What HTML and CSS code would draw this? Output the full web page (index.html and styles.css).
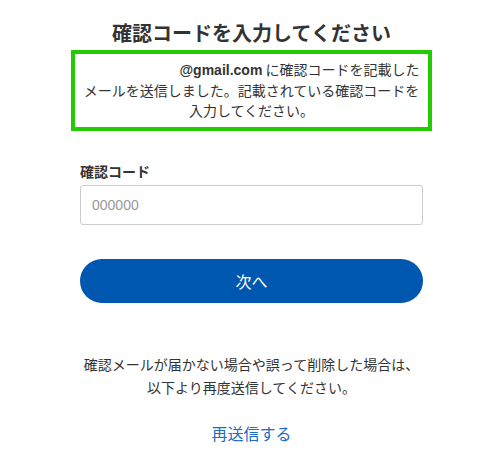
FILE: index.html
```html
<!DOCTYPE html>
<html lang="ja">

<head>
    <meta charset="UTF-8">
    <meta name="viewport" content="width=device-width, initial-scale=1.0">
    <title>確認コード</title>
    <link rel="stylesheet" href="styles.css">
</head>

<body>
    <div class="container">
        <h1>確認コードを入力してください</h1>

        <p class="notice">
            <span class="email"><span class="hidden-user"></span>@gmail.com</span> に確認コードを記載した<br>
            メールを送信しました。記載されている確認コードを<br>
            入力してください。
        </p>

        <form class="code-form">
            <label for="code">確認コード</label>
            <input id="code" type="text" placeholder="000000">
            <button type="button">次へ</button>
        </form>

        <p class="help">確認メールが届かない場合や誤って削除した場合は、<br>以下より再度送信してください。</p>

        <a class="resend" href="#">再送信する</a>
    </div>
</body>

</html>
```

FILE: styles.css
```css
* {
    margin: 0;
    padding: 0;
    box-sizing: border-box;
}

body {
    font-family: 'Noto Sans CJK JP', sans-serif;
    background: #fff;
    color: #333;
}

.container {
    width: 343px;
    margin-left: 80px;
    display: flex;
    flex-direction: column;
    align-items: center;
}

h1 {
    font-size: 20px;
    font-weight: bold;
    margin-top: 19px;
    line-height: 28px;
    color: #333;
}

.notice {
    width: 361px;
    margin-top: 3px;
    padding: 5px 6px 7px;
    border: 4px solid #22cc00;
    font-size: 14px;
    line-height: 20px;
    text-align: center;
    white-space: nowrap;
    color: #333;
}

.email {
    font-family: 'Liberation Sans', sans-serif;
    font-weight: bold;
    font-size: 14px;
}

.hidden-user {
    display: inline-block;
    width: 96px;
}

.code-form {
    width: 100%;
    margin-top: 31px;
    display: flex;
    flex-direction: column;
}

.code-form label {
    font-size: 14px;
    font-weight: bold;
    line-height: 18px;
}

.code-form input {
    margin-top: 5px;
    height: 40px;
    border: 1px solid #ccc;
    border-radius: 3px;
    padding: 0 11px;
    font-family: 'Liberation Sans', sans-serif;
    font-size: 14px;
    color: #333;
}

.code-form input::placeholder {
    color: #999;
}

.code-form button {
    margin-top: 34px;
    height: 44px;
    border: none;
    border-radius: 22px;
    background: #0057b0;
    color: #fff;
    font-family: 'Noto Sans CJK JP', sans-serif;
    font-size: 16px;
}

.help {
    margin-top: 50px;
    font-size: 14px;
    line-height: 23px;
    text-align: center;
    white-space: nowrap;
}

.resend {
    margin-top: 22px;
    font-size: 16px;
    color: #1a6cc4;
    text-decoration: none;
}
```
